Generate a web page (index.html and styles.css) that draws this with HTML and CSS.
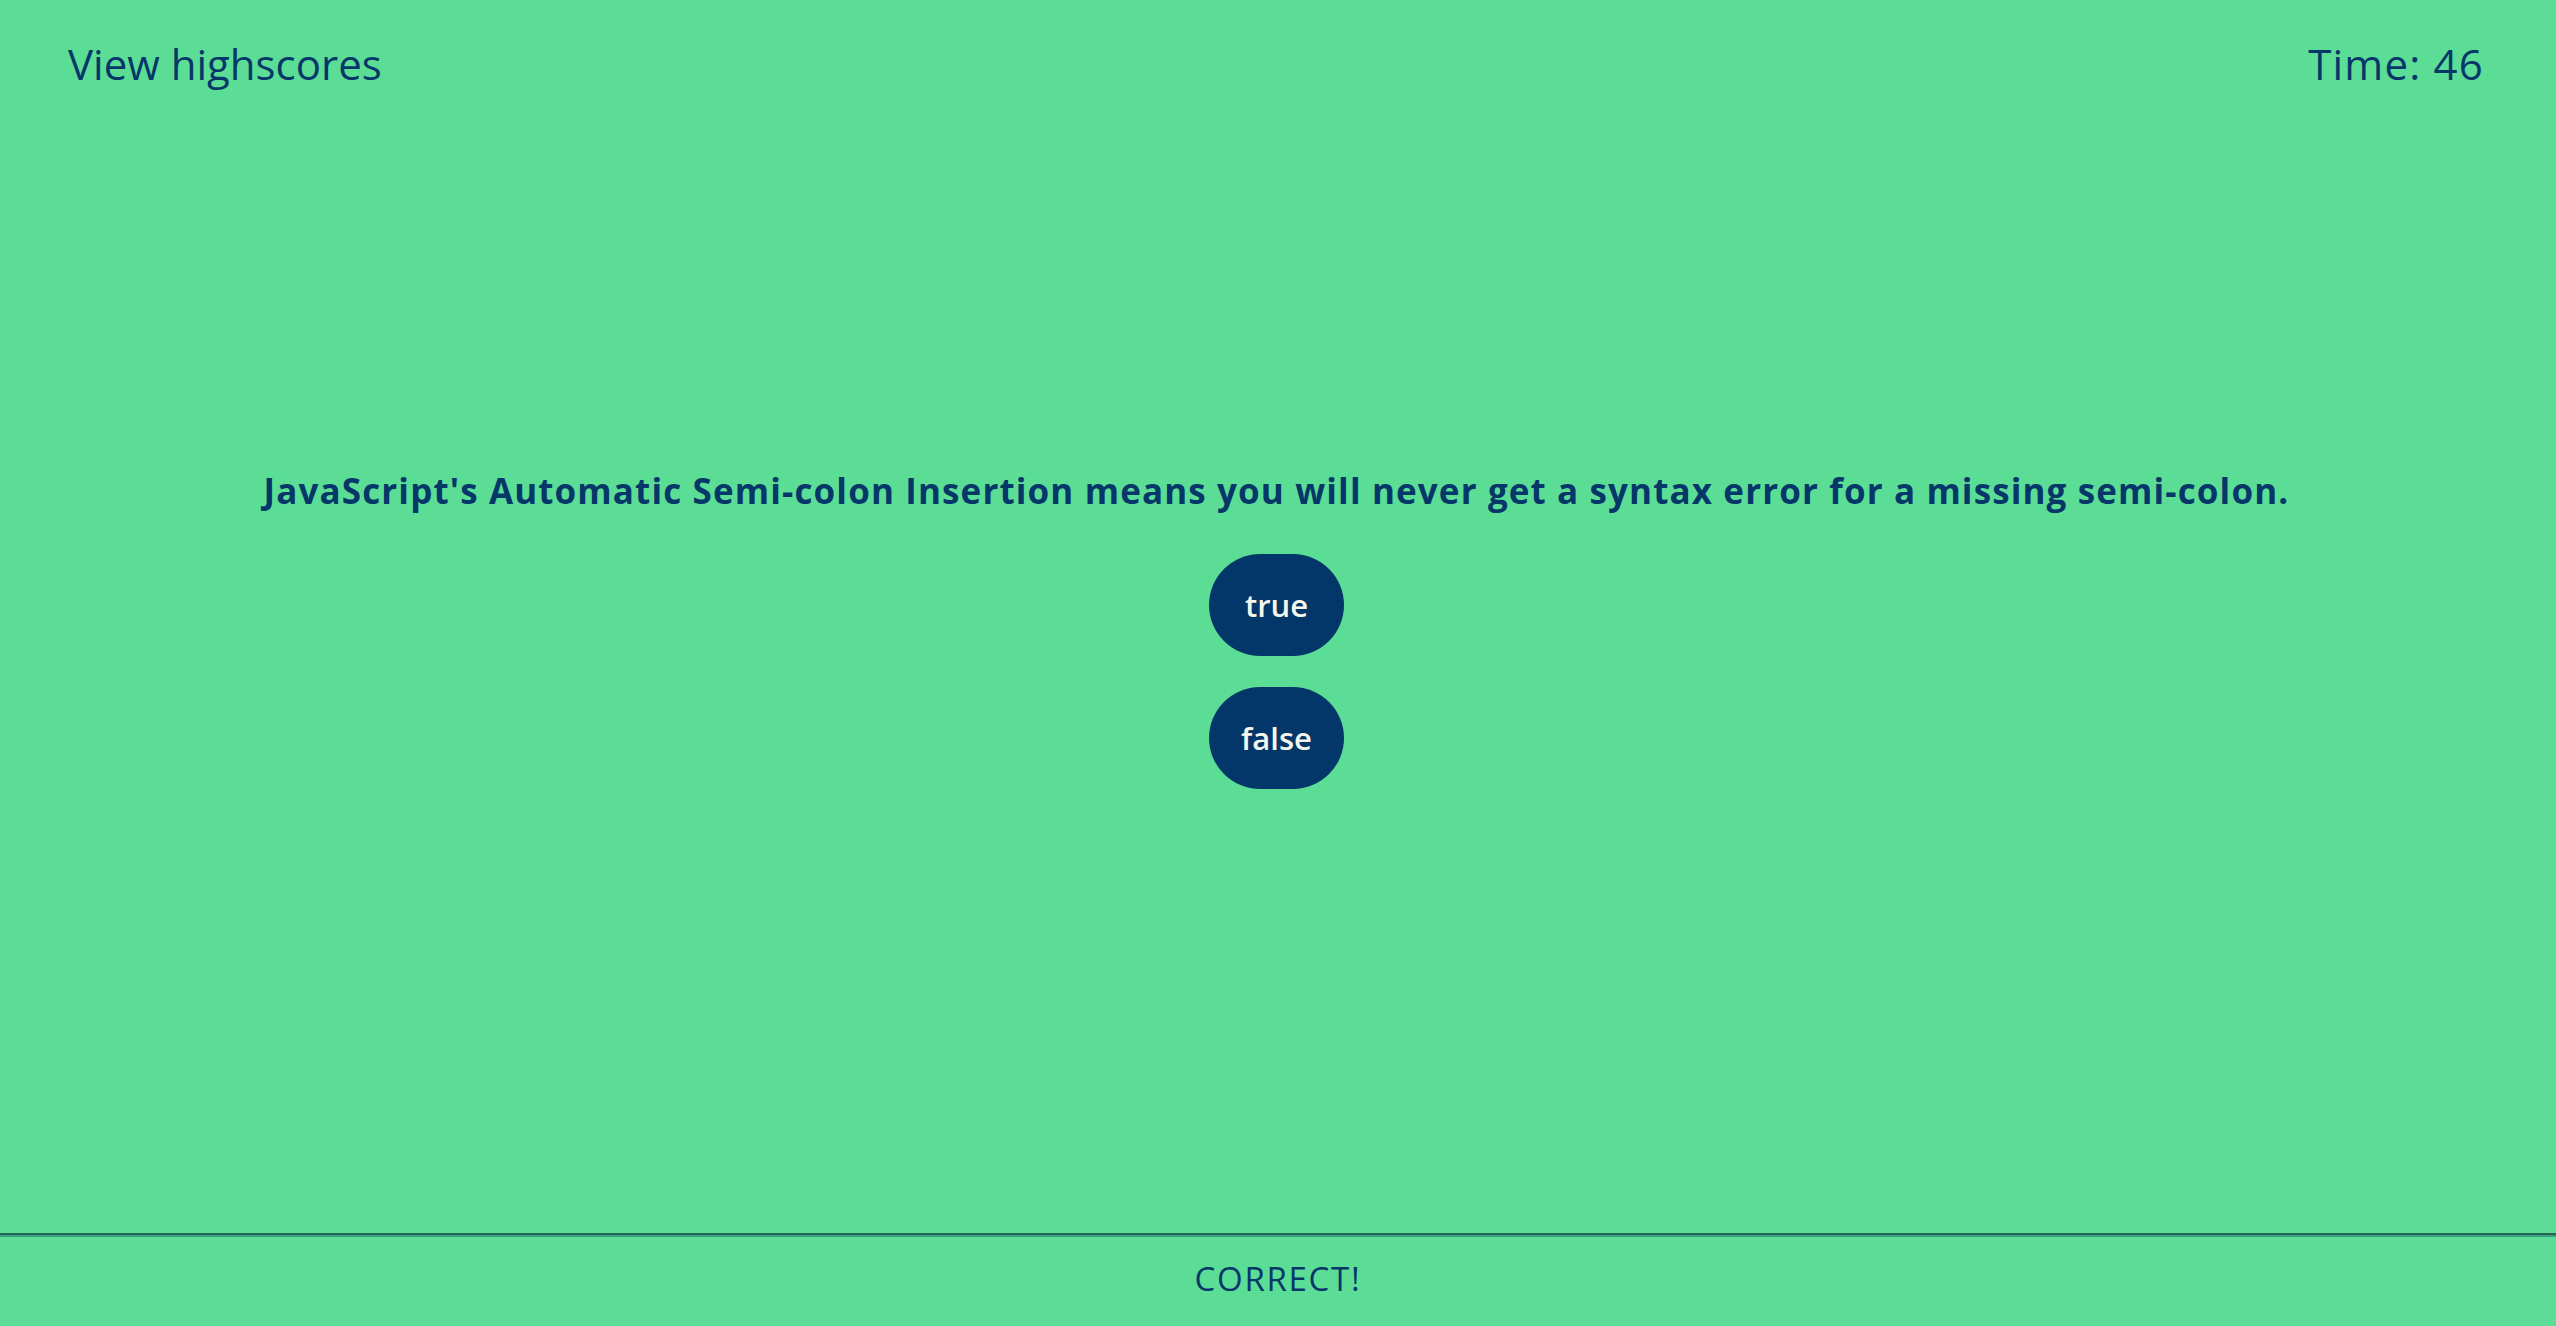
FILE: index.html
```html
<!DOCTYPE html>
<html lang="en">
<head>
<meta charset="utf-8">
<title>Code Quiz</title>
<link rel="stylesheet" href="styles.css">
</head>
<body>
<div class="page">
  <header class="topbar">
    <a class="highscores" href="#">View highscores</a>
    <div class="timer">Time: 46</div>
  </header>
  <main class="quiz">
    <h2 class="question">JavaScript's Automatic Semi-colon Insertion means you will never get a syntax error for a missing semi-colon.</h2>
    <div class="choices">
      <button class="choice">true</button>
      <button class="choice">false</button>
    </div>
  </main>
  <footer class="feedback">
    <p class="result">CORRECT!</p>
  </footer>
</div>
</body>
</html>
```
FILE: styles.css
```css
html, body {
  margin: 0;
  padding: 0;
  background: #5cdd96;
}
body {
  font-family: "Open Sans", "Noto Sans", sans-serif;
  color: #063769;
}
.page {
  height: 1326px;
  display: flex;
  flex-direction: column;
}
.topbar {
  display: flex;
  justify-content: space-between;
  align-items: flex-start;
  padding: 36px 72px 0 68px;
  height: 100px;
  box-sizing: border-box;
}
.highscores, .timer {
  font-size: 42px;
  line-height: 56px;
  color: #063769;
  text-decoration: none;
  font-weight: 400;
}
.timer {
  letter-spacing: 1.2px;
}
.quiz {
  flex: 1;
  display: flex;
  flex-direction: column;
  align-items: center;
  padding: 367px 3px 0 0;
}
.question {
  margin: 0;
  font-size: 35px;
  line-height: 48px;
  font-weight: 700;
  text-align: center;
  letter-spacing: 1.12px;
}
.choices {
  margin-top: 39px;
  display: flex;
  flex-direction: column;
  align-items: center;
  gap: 31px;
}
.choice {
  font-family: inherit;
  background: #043769;
  color: #f4f6ec;
  border: none;
  border-radius: 51px;
  width: 135px;
  height: 102px;
  font-size: 31px;
  font-weight: 600;
  padding: 0;
  cursor: pointer;
}
.feedback {
  border-top: 2px solid #24664f;
  box-shadow: inset 0 2px 0 #3c9e80;
  box-sizing: border-box;
  height: 93px;
  padding-bottom: 4px;
  display: flex;
  align-items: center;
  justify-content: center;
}
.result {
  margin: 0;
  font-size: 33px;
  color: #063769;
  letter-spacing: 1.7px;
}
```
